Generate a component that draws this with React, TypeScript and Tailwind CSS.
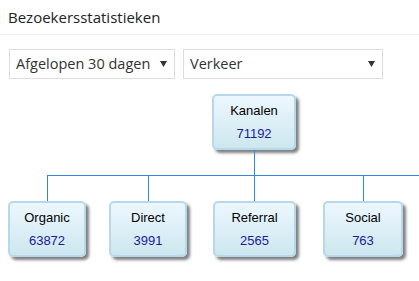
import React from 'react'

interface Channel {
  name: string
  value: number
  width: string
  margin: string
}

const channels: Channel[] = [
  { name: 'Organic', value: 63872, width: 'w-[78px]', margin: 'ml-[8px]' },
  { name: 'Direct', value: 3991, width: 'w-[78px]', margin: 'ml-[23px]' },
  { name: 'Referral', value: 2565, width: 'w-[83px]', margin: 'ml-[26px]' },
  { name: 'Social', value: 763, width: 'w-[80px]', margin: 'ml-[27px]' },
]

const Arrow = () => (
  <svg width="7" height="6" viewBox="0 0 7 6" className="shrink-0 ml-auto">
    <path d="M0 0 H7 L3.5 6 Z" fill="#333" />
  </svg>
)

const Select = ({ label, width }: { label: string; width: string }) => (
  <div className={`${width} h-[30px] border border-[#ddd] flex items-center pl-[6px] pr-[7px] text-[14.5px] text-[#333]`}>
    <span className="whitespace-nowrap">{label}</span>
    <Arrow />
  </div>
)

const Node = ({ name, value, width }: { name: string; value: number; width: string }) => (
  <div
    className={`${width} h-[56px] border-2 border-[#b5d9ea] rounded-[5px] bg-linear-to-b from-[#edf7ff] to-[#cde7ee] shadow-[3px_3px_3px_rgba(0,0,0,0.5)] flex flex-col items-center pt-[5px] text-[13px] leading-[20px]`}
    style={{ fontFamily: '"Liberation Sans", Arial, sans-serif' }}
  >
    <span className="text-black">{name}</span>
    <span className="text-[#1a1a99] mt-[3px]">{value}</span>
  </div>
)

export default function App() {
  return (
    <div
      className="w-[419px] h-[281px] bg-white overflow-hidden"
      style={{ fontFamily: '"Open Sans", "Noto Sans", sans-serif' }}
    >
      <div className="h-[35px] border-b border-[#eee] flex items-center pl-[8px] text-[15px] text-[#222]">
        Bezoekersstatistieken
      </div>

      <div className="flex gap-[8px] pl-[9px] mt-[14px]">
        <Select label="Afgelopen 30 dagen" width="w-[166px]" />
        <Select label="Verkeer" width="w-[200px]" />
      </div>

      <div className="mt-[15px]">
        <div className="ml-[212px]">
          <Node name="Kanalen" value={71192} width="w-[84px]" />
        </div>
        <div className="ml-[254px] w-px h-[25px] bg-[#3388dd]" />
        <div className="ml-[47px] h-px bg-[#3388dd]" />
        <div className="flex">
          {channels.map((c) => (
            <div key={c.name} className={`${c.margin} flex flex-col items-center`}>
              <div className="w-px h-[25px] bg-[#3388dd]" />
              <Node name={c.name} value={c.value} width={c.width} />
            </div>
          ))}
        </div>
      </div>
    </div>
  )
}
